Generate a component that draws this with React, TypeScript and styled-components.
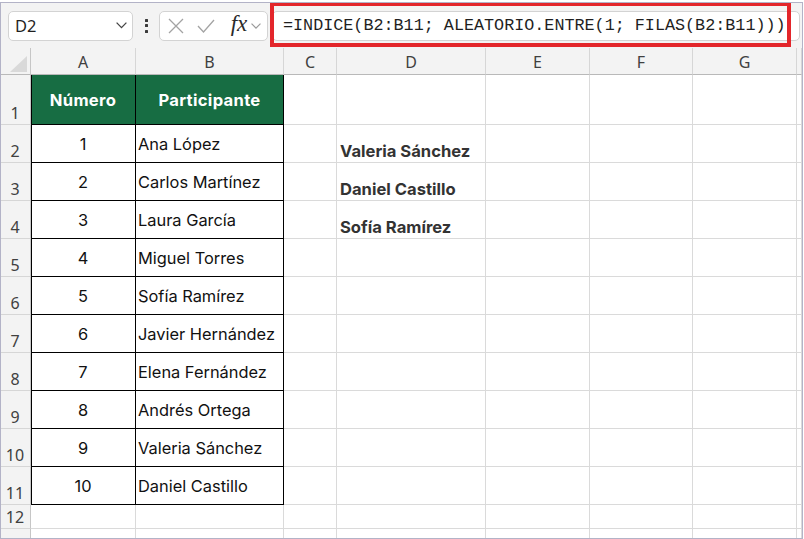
import React from "react";
import styled, { createGlobalStyle, css } from "styled-components";

const GlobalStyle = createGlobalStyle`
  html, body { margin: 0; padding: 0; background: #ffffff; }
  body { font-family: "Noto Sans", "Liberation Sans", sans-serif; }
  * { box-sizing: border-box; }
`;

const COLS = [30, 105, 148, 53, 149, 104, 103, 104];
const LETTERS = ["A", "B", "C", "D", "E", "F", "G", ""];
const ROW_HEIGHTS = [50, 38, 38, 38, 38, 38, 38, 38, 38, 38, 38, 24, 38];

const Window = styled.div`
  margin-top: 2px;
  width: 803px;
  height: 537px;
  border: 1px solid #b3b3c7;
  background: #f3f3f3;
  overflow: hidden;
  display: flex;
  flex-direction: column;
`;

const Toolbar = styled.div`
  height: 45px;
  flex: none;
  display: flex;
  align-items: center;
  padding-left: 7px;
  padding-right: 2px;
  background: #f3f3f3;
`;

const NameBox = styled.div`
  width: 125px;
  height: 30px;
  background: #ffffff;
  border: 1px solid #d3d3d3;
  border-radius: 5px;
  display: flex;
  align-items: center;
  justify-content: space-between;
  padding: 0 5px 0 6px;
  font-family: "Noto Sans", sans-serif;
  font-size: 16.5px;
  color: #1f1f1f;
`;

const DotsButton = styled.div`
  width: 26px;
  height: 30px;
  display: flex;
  flex-direction: column;
  align-items: center;
  justify-content: center;
  gap: 2.5px;
`;

const Dot = styled.span`
  width: 3px;
  height: 3px;
  background: #3a3a3a;
  border-radius: 0.5px;
`;

const Controls = styled.div`
  width: 109px;
  height: 30px;
  background: #ffffff;
  border: 1px solid #d3d3d3;
  border-radius: 5px;
  display: flex;
  align-items: center;
  padding-left: 7px;
`;

const IconSlot = styled.span<{ $w: number }>`
  width: ${(p) => p.$w}px;
  display: flex;
  align-items: center;
  justify-content: center;
`;

const Fx = styled.span`
  font-family: "Liberation Serif", "DejaVu Serif", serif;
  font-style: italic;
  font-size: 23px;
  color: #2a2a2a;
  line-height: 1;
  margin-top: -4px;
`;

const FormulaWrap = styled.div`
  position: relative;
  flex: 1;
  margin-left: 4px;
  height: 30px;
`;

const FormulaInput = styled.div`
  height: 100%;
  background: #ffffff;
  border: 1px solid #d3d3d3;
  border-radius: 5px;
  display: flex;
  align-items: center;
  padding-left: 10px;
  font-family: "Liberation Mono", "DejaVu Sans Mono", monospace;
  font-size: 16.75px;
  color: #1f1f1f;
  white-space: nowrap;
  overflow: hidden;
`;

const Highlight = styled.div`
  position: absolute;
  left: -2px;
  right: 9px;
  top: -9px;
  bottom: -6px;
  border: 4px solid #e3262b;
  pointer-events: none;
`;

const Grid = styled.div`
  flex: 1;
  display: grid;
  grid-template-columns: ${COLS.map((c) => c + "px").join(" ")} 1fr;
  grid-template-rows: 27px ${ROW_HEIGHTS.map((h) => h + "px").join(" ")};
  background: #ffffff;
`;

const Corner = styled.div`
  position: relative;
  background: #f3f3f3;
  border-right: 1px solid #c6c6c6;
  border-bottom: 1px solid #b9b9b9;
`;

const CornerTriangle = styled.div`
  position: absolute;
  right: 3px;
  bottom: 2px;
  width: 0;
  height: 0;
  border-left: 17px solid transparent;
  border-bottom: 16px solid #d9d9d9;
`;

const ColHead = styled.div`
  background: #f3f3f3;
  border-right: 1px solid #d6d6d6;
  border-bottom: 1px solid #b9b9b9;
  display: flex;
  align-items: center;
  justify-content: center;
  font-family: "Noto Sans", sans-serif;
  font-size: 16px;
  color: #404040;
  padding-top: 1px;
`;

const RowHead = styled.div`
  background: #f3f3f3;
  border-right: 1px solid #c6c6c6;
  border-bottom: 1px solid #d6d6d6;
  display: flex;
  align-items: flex-end;
  justify-content: center;
  padding-bottom: 1px;
  padding-right: 1px;
  font-family: "Noto Sans", sans-serif;
  font-size: 16px;
  line-height: 20px;
  color: #404040;
`;

type CellProps = {
  $table?: boolean;
  $first?: boolean;
  $header?: boolean;
  $center?: boolean;
  $bottom?: boolean;
  $bold?: boolean;
};

const Cell = styled.div<CellProps>`
  border-right: 1px solid #dadada;
  border-bottom: 1px solid #dadada;
  display: flex;
  align-items: center;
  padding: 1px 2px 0 2px;
  font-family: "Inter", "Liberation Sans", sans-serif;
  font-size: 16.4px;
  color: #111111;
  white-space: nowrap;
  overflow: hidden;
  ${(p) =>
    p.$table &&
    css`
      border-right-color: #000000;
      border-bottom-color: #000000;
    `}
  ${(p) =>
    p.$first &&
    css`
      box-shadow: inset 1px 0 0 #000000;
    `}
  ${(p) =>
    p.$center &&
    css`
      justify-content: center;
    `}
  ${(p) =>
    p.$bottom &&
    css`
      align-items: flex-end;
      padding: 0 3px 1px 3px;
    `}
  ${(p) =>
    p.$bold &&
    css`
      font-weight: 700;
      color: #333333;
      font-size: 16.6px;
    `}
  ${(p) =>
    p.$header &&
    css`
      background: #176d43;
      color: #ffffff;
      font-weight: 700;
      font-size: 16.6px;
      justify-content: center;
      padding-top: 0;
      letter-spacing: 0.3px;
    `}
`;

const names: [string, string][] = [
  ["1", "Ana López"],
  ["2", "Carlos Martínez"],
  ["3", "Laura García"],
  ["4", "Miguel Torres"],
  ["5", "Sofía Ramírez"],
  ["6", "Javier Hernández"],
  ["7", "Elena Fernández"],
  ["8", "Andrés Ortega"],
  ["9", "Valeria Sánchez"],
  ["10", "Daniel Castillo"],
];

const picks: Record<number, string> = {
  2: "Valeria Sánchez",
  3: "Daniel Castillo",
  4: "Sofía Ramírez",
};

const Chevron = ({ w = 11, color = "#444" }: { w?: number; color?: string }) => (
  <svg width={w} height={w * 0.6} viewBox="0 0 11 6.6" fill="none">
    <polyline points="0.6,0.6 5.5,5.6 10.4,0.6" stroke={color} strokeWidth="1.3" />
  </svg>
);

export default function App() {
  const rows = ROW_HEIGHTS.map((_, i) => i + 1);
  return (
    <>
      <GlobalStyle />
      <Window>
        <Toolbar>
          <NameBox>
            <span>D2</span>
            <Chevron />
          </NameBox>
          <DotsButton>
            <Dot />
            <Dot />
            <Dot />
          </DotsButton>
          <Controls>
            <IconSlot $w={18}>
              <svg width="16" height="16" viewBox="0 0 16 16">
                <path d="M1 1 L15 15 M15 1 L1 15" stroke="#a3a3a3" strokeWidth="1.3" />
              </svg>
            </IconSlot>
            <IconSlot $w={12} />
            <IconSlot $w={18}>
              <svg width="18" height="14" viewBox="0 0 18 14">
                <polyline points="1,7 6.5,13 17,1" fill="none" stroke="#a3a3a3" strokeWidth="1.3" />
              </svg>
            </IconSlot>
            <IconSlot $w={14} />
            <IconSlot $w={20}>
              <Fx>fx</Fx>
            </IconSlot>
            <IconSlot $w={14}>
              <Chevron w={10} color="#9a9a9a" />
            </IconSlot>
          </Controls>
          <FormulaWrap>
            <FormulaInput>=INDICE(B2:B11; ALEATORIO.ENTRE(1; FILAS(B2:B11)))</FormulaInput>
            <Highlight />
          </FormulaWrap>
        </Toolbar>
        <Grid>
          <Corner>
            <CornerTriangle />
          </Corner>
          {LETTERS.map((l, i) => (
            <ColHead key={i}>{l}</ColHead>
          ))}
          {rows.map((r) => {
            const inTable = r <= 11;
            const data = r >= 2 && r <= 11 ? names[r - 2] : null;
            return (
              <React.Fragment key={r}>
                <RowHead>{r}</RowHead>
                {r === 1 ? (
                  <>
                    <Cell $table $first $header>
                      Número
                    </Cell>
                    <Cell $table $header>
                      Participante
                    </Cell>
                  </>
                ) : (
                  <>
                    <Cell $table={inTable} $first={inTable} $center>
                      {data ? data[0] : ""}
                    </Cell>
                    <Cell $table={inTable}>{data ? data[1] : ""}</Cell>
                  </>
                )}
                <Cell />
                <Cell $bottom $bold>
                  {picks[r] ?? ""}
                </Cell>
                <Cell />
                <Cell />
                <Cell />
                <Cell />
              </React.Fragment>
            );
          })}
        </Grid>
      </Window>
    </>
  );
}
